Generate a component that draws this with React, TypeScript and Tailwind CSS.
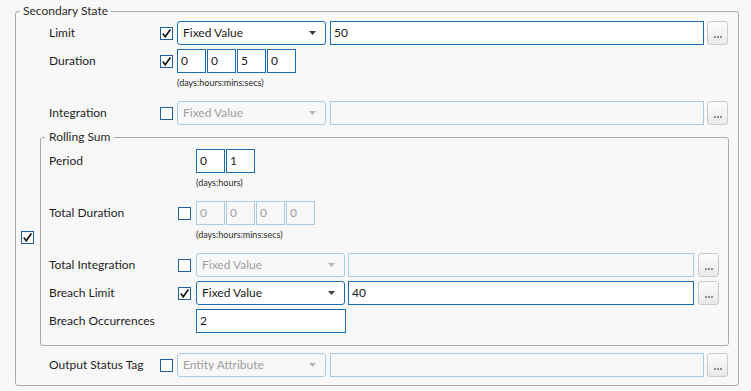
import type { ReactNode } from 'react';
import { clsx } from 'clsx';

function CheckBox({ checked = false }: { checked?: boolean }) {
  return (
    <span className="flex size-[13px] shrink-0 items-center justify-center border border-[#1f5f9f] bg-white">
      {checked && (
        <svg width="11" height="11" viewBox="0 0 11 11">
          <path d="M1.8 5.6 L4.2 8.8 L9.4 1.4" fill="none" stroke="#1b1b1b" strokeWidth="1.7" />
        </svg>
      )}
    </span>
  );
}

function Combo({ value, disabled = false }: { value: string; disabled?: boolean }) {
  return (
    <div
      className={clsx(
        'flex h-6 w-[149px] shrink-0 items-center justify-between rounded-[3px] border pl-[5px] pr-[9px]',
        disabled ? 'border-[#a9cbe5] text-[#9e9e9e]' : 'border-[#1a6bb0] bg-white text-[#1b1b1b]',
      )}
    >
      <span>{value}</span>
      <svg width="7" height="4" viewBox="0 0 7 4">
        <path d="M0 0h7L3.5 4z" fill={disabled ? '#b5b5b5' : '#3c3c3c'} />
      </svg>
    </div>
  );
}

function TextBox({ value = '', disabled = false, className }: { value?: string; disabled?: boolean; className?: string }) {
  return (
    <div
      className={clsx(
        'flex h-6 items-center border pl-[3px]',
        disabled ? 'border-[#a9cbe5] text-[#9e9e9e]' : 'border-[#1a6bb0] bg-white text-[#1b1b1b]',
        className,
      )}
    >
      {value}
    </div>
  );
}

function Ellipsis() {
  return (
    <div className="flex h-6 w-[21px] shrink-0 items-end justify-center gap-px rounded-[3px] border border-[#cbcbcb] bg-linear-to-b from-[#fcfcfc] to-[#e9e9e9] pb-[6px]">
      <span className="size-[2px] bg-[#8e8e8e]" />
      <span className="size-[2px] bg-[#8e8e8e]" />
      <span className="size-[2px] bg-[#8e8e8e]" />
    </div>
  );
}

function Digits({ values, disabled = false }: { values: string[]; disabled?: boolean }) {
  return (
    <div className="flex gap-px">
      {values.map((v, i) => (
        <TextBox key={i} value={v} disabled={disabled} className="w-[29px]" />
      ))}
    </div>
  );
}

function Hint({ children }: { children: ReactNode }) {
  return <div className="mt-[4px] h-[12px] text-[9px] leading-[12px] text-[#2b2b2b]">{children}</div>;
}

export default function App() {
  return (
    <div className="min-h-[391px] bg-[#f8f8f8] pt-[3px] pl-[15px] pr-[12px] font-[Lato,sans-serif] text-[12px] text-[#1e1e1e]">
      <fieldset className="rounded-[3px] border border-[#ababab] pb-[8px]">
        <legend className="ml-[4px] px-[3px] leading-[16px] text-[#2a2a2a]">Secondary State</legend>

        <div className="mt-[2px] flex flex-col pl-[33px] pr-[10px]">
          <div className="flex h-6 items-center">
            <span className="w-[111px] shrink-0">Limit</span>
            <CheckBox checked />
            <div className="ml-[4px] flex flex-1 gap-[4px]">
              <Combo value="Fixed Value" />
              <TextBox value="50" className="flex-1" />
            </div>
            <div className="ml-[3px]">
              <Ellipsis />
            </div>
          </div>

          <div className="mt-[4px] flex h-6 items-center">
            <span className="w-[111px] shrink-0">Duration</span>
            <CheckBox checked />
            <div className="ml-[4px]">
              <Digits values={['0', '0', '5', '0']} />
            </div>
          </div>
          <div className="pl-[128px]">
            <Hint>(days:hours:mins:secs)</Hint>
          </div>

          <div className="mt-[12px] flex h-6 items-center">
            <span className="w-[111px] shrink-0">Integration</span>
            <CheckBox />
            <div className="ml-[4px] flex flex-1 gap-[4px]">
              <Combo value="Fixed Value" disabled />
              <TextBox disabled className="flex-1" />
            </div>
            <div className="ml-[3px]">
              <Ellipsis />
            </div>
          </div>
        </div>

        <div className="mt-[4px] flex items-center pr-[9px]">
          <div className="w-[24px] shrink-0 pl-[5px]">
            <CheckBox checked />
          </div>
          <fieldset className="min-w-0 flex-1 rounded-[3px] border border-[#ababab] pb-[12px]">
            <legend className="ml-[4px] px-[4px] leading-[16px] text-[#2a2a2a]">Rolling Sum</legend>
            <div className="mt-[4px] flex flex-col pl-[8px] pr-[9px]">
              <div className="flex h-6 items-center">
                <span className="w-[147px] shrink-0">Period</span>
                <Digits values={['0', '1']} />
              </div>
              <div className="pl-[147px]">
                <Hint>(days:hours)</Hint>
              </div>

              <div className="mt-[12px] flex h-6 items-center">
                <span className="w-[129px] shrink-0">Total Duration</span>
                <CheckBox />
                <div className="ml-[5px]">
                  <Digits values={['0', '0', '0', '0']} disabled />
                </div>
              </div>
              <div className="pl-[147px]">
                <Hint>(days:hours:mins:secs)</Hint>
              </div>

              <div className="mt-[12px] flex h-6 items-center">
                <span className="w-[129px] shrink-0">Total Integration</span>
                <CheckBox />
                <div className="ml-[5px] flex flex-1 gap-[3px]">
                  <Combo value="Fixed Value" disabled />
                  <TextBox disabled className="flex-1" />
                </div>
                <div className="ml-[4px]">
                  <Ellipsis />
                </div>
              </div>

              <div className="mt-[4px] flex h-6 items-center">
                <span className="w-[129px] shrink-0">Breach Limit</span>
                <CheckBox checked />
                <div className="ml-[5px] flex flex-1 gap-[3px]">
                  <Combo value="Fixed Value" />
                  <TextBox value="40" className="flex-1" />
                </div>
                <div className="ml-[4px]">
                  <Ellipsis />
                </div>
              </div>

              <div className="mt-[4px] flex h-6 items-center">
                <span className="w-[147px] shrink-0">Breach Occurrences</span>
                <TextBox value="2" className="w-[150px]" />
              </div>
            </div>
          </fieldset>
        </div>

        <div className="mt-[7px] flex h-6 items-center pl-[33px] pr-[10px]">
          <span className="w-[111px] shrink-0">Output Status Tag</span>
          <CheckBox />
          <div className="ml-[4px] flex flex-1 gap-[4px]">
            <Combo value="Entity Attribute" disabled />
            <TextBox disabled className="flex-1" />
          </div>
          <div className="ml-[3px]">
            <Ellipsis />
          </div>
        </div>
      </fieldset>
    </div>
  );
}
